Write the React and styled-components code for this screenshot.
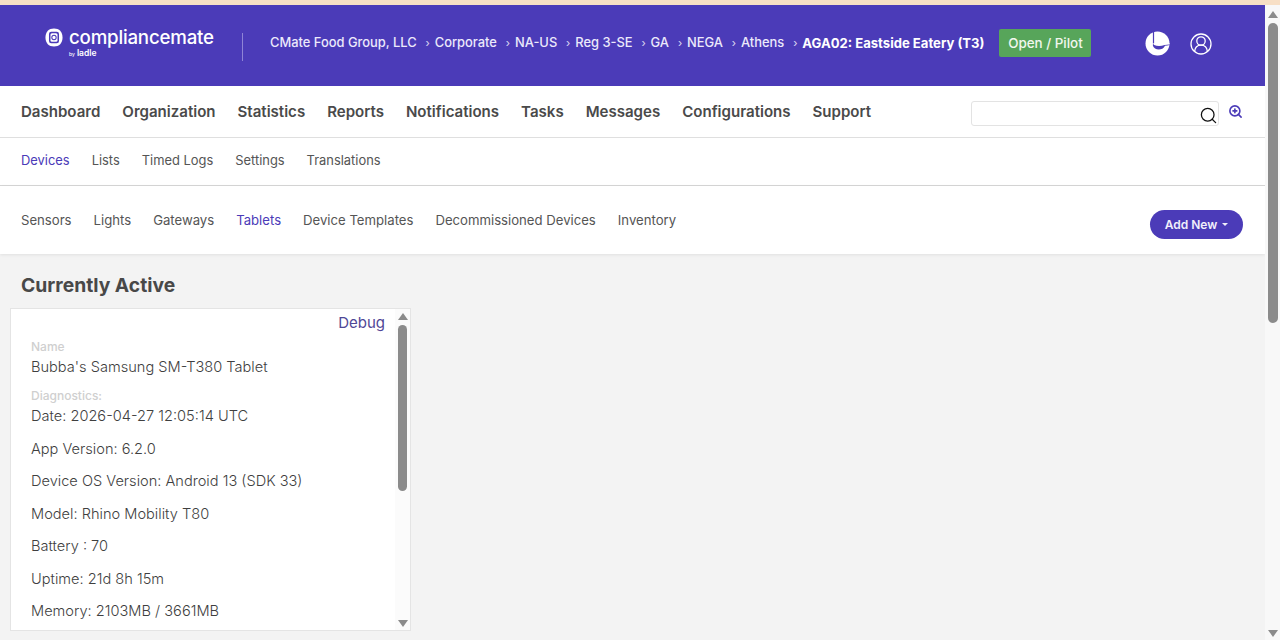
import React from "react";
import styled, { createGlobalStyle } from "styled-components";
import { Search, ZoomIn } from "lucide-react";

const GlobalStyle = createGlobalStyle`
  html, body {
    margin: 0;
    height: 100%;
    overflow: hidden;
    background: #f3f3f3;
  }
  * {
    box-sizing: border-box;
  }
  body {
    font-family: Inter, "Open Sans", sans-serif;
    color: #444;
  }
`;

const Window = styled.div`
  height: 640px;
  display: flex;
  flex-direction: column;
`;
const TopStrip = styled.div`
  height: 5px;
  background: #f7dfc5;
  flex: none;
`;
const Body = styled.div`
  flex: 1;
  display: flex;
  min-height: 0;
`;
const Page = styled.div`
  flex: 1;
  min-width: 0;
`;
const Header = styled.header`
  height: 81px;
  background: #4b3bb8;
  color: #fff;
  display: flex;
  align-items: flex-start;
  padding: 22px 0 0 45px;
`;
const Logo = styled.div`
  width: 170px;
  display: flex;
  gap: 6px;
  margin-top: 1px;
`;
const LogoText = styled.div`
  display: flex;
  flex-direction: column;
  .name {
    font-size: 18.7px;
    line-height: 20px;
    font-weight: 500;
    letter-spacing: -0.2px;
  }
  .by {
    font-size: 5px;
    line-height: 10px;
    font-weight: 500;
    b {
      font-size: 8.5px;
      font-weight: 600;
      margin-left: 2px;
    }
  }
`;
const Divider = styled.div`
  width: 1px;
  height: 28px;
  background: #8f84d6;
  margin: 6px 27px 0 27px;
`;
const Crumbs = styled.div`
  display: flex;
  align-items: center;
  height: 31px;
  font-size: 12.9px;
  color: #ece9fb;
  white-space: nowrap;
`;
const Crumb = styled.span`
  font-weight: ${(p) => (p.$current ? 700 : 500)};
  font-size: ${(p) => (p.$current ? "13.1px" : "inherit")};
  color: ${(p) => (p.$current ? "#fff" : "#ece9fb")};
  margin-top: ${(p) => (p.$current ? "1px" : "0")};
`;
const Chevron = styled.span`
  width: 18px;
  text-align: center;
  font-size: 11px;
  padding-left: 4px;
  opacity: 0.9;
`;
const StatusBadge = styled.span`
  width: 92px;
  height: 28px;
  margin: 1px 0 0 15px;
  background: #57a55a;
  border-radius: 2px;
  display: flex;
  align-items: center;
  justify-content: center;
  font-size: 13.4px;
  font-weight: 500;
  color: #f2f7ee;
`;
const HeaderIcons = styled.div`
  display: flex;
  align-items: center;
  gap: 20px;
  margin: 4px 0 0 54px;
`;

const NavBar = styled.nav`
  height: 52px;
  background: #fff;
  border-bottom: 1px solid #dfdfdf;
  display: flex;
  align-items: center;
  justify-content: space-between;
  padding: 0 22px 0 21px;
`;
const MainLinks = styled.div`
  display: flex;
  gap: 22px;
  margin-top: -1px;
`;
const MainLink = styled.a`
  font-size: 15.05px;
  font-weight: 600;
  color: #4a4a4a;
`;
const SearchWrap = styled.div`
  display: flex;
  align-items: center;
  gap: 9px;
  margin-top: 3px;
  color: #4b3bb8;
`;
const SearchBox = styled.div`
  width: 248px;
  height: 25px;
  border: 1px solid #e3e3e3;
  border-radius: 3px;
  background: #fff;
  display: flex;
  align-items: flex-end;
  justify-content: flex-end;
  color: #111;
`;
const ZoomMark = styled.span`
  display: flex;
  margin-top: -3px;
`;
const SubBar = styled.div`
  height: 48px;
  background: #fff;
  border-bottom: 1px solid #d6d6d6;
  display: flex;
  align-items: center;
  gap: 22px;
  padding: 0 21px 2px;
  font-size: 12.9px;
`;
const TabBar = styled.div`
  height: 68px;
  background: #fff;
  box-shadow: 0 1px 3px rgba(0, 0, 0, 0.08);
  display: flex;
  align-items: flex-start;
  justify-content: space-between;
  padding: 24px 22px 0 21px;
  font-size: 13.15px;
`;
const TabLinks = styled.div`
  display: flex;
  gap: 22px;
`;
const SubLink = styled.a`
  line-height: 20px;
  color: ${(p) => (p.$active ? "#4b3bb8" : "#555")};
`;
const AddButton = styled.button`
  width: 93px;
  height: 29px;
  border: 0;
  border-radius: 15px;
  background: #4b3bb8;
  color: #f1effb;
  font: 600 12px Inter, sans-serif;
  display: flex;
  align-items: center;
  justify-content: center;
  gap: 5px;
  &::after {
    content: "";
    border-top: 3px solid #f1effb;
    border-left: 3px solid transparent;
    border-right: 3px solid transparent;
  }
`;
const Title = styled.h2`
  margin: 18px 0 10px 21px;
  font-size: 19.3px;
  line-height: 26px;
  font-weight: 700;
  color: #484848;
`;
const Card = styled.section`
  width: 401px;
  height: 323px;
  margin-left: 10px;
  background: #fff;
  border: 1px solid #e4e4e4;
  display: flex;
  overflow: hidden;
`;
const CardBody = styled.div`
  flex: 1;
  min-width: 0;
  padding: 5px 10px 0 20px;
`;
const DebugLink = styled.a`
  display: block;
  text-align: right;
  font-size: 15px;
  line-height: 18px;
  color: #4f4796;
`;
const FieldLabel = styled.div`
  font-size: 12px;
  line-height: 16px;
  font-weight: 500;
  color: #cfcfcf;
  margin-top: ${(p) => p.$top || 0}px;
`;
const FieldValue = styled.div`
  font-size: 14.6px;
  line-height: 22px;
  font-weight: 300;
  color: #3f3f3f;
  margin-top: ${(p) => p.$top || 0}px;
  margin-bottom: ${(p) => p.$gap || 0}px;
`;
const Track = styled.div`
  flex: none;
  width: ${(p) => p.$w}px;
  background: ${(p) => p.$bg};
  display: flex;
  flex-direction: column;
  align-items: center;
  padding: ${(p) => p.$pad};
`;
const Arrow = styled.div`
  flex: none;
  border-left: 5px solid transparent;
  border-right: 5px solid transparent;
  ${(p) => (p.$down ? "border-top" : "border-bottom")}: 7px solid #8b8b8b;
  margin-top: ${(p) => (p.$down ? "auto" : "0")};
`;
const Thumb = styled.div`
  flex: none;
  width: ${(p) => p.$w}px;
  height: ${(p) => p.$h}px;
  background: #8b8b8b;
  border-radius: 5px;
  margin-top: 5px;
`;

const crumbs = ["CMate Food Group, LLC", "Corporate", "NA-US", "Reg 3-SE", "GA", "NEGA", "Athens"];
const mainLinks = ["Dashboard", "Organization", "Statistics", "Reports", "Notifications", "Tasks", "Messages", "Configurations", "Support"];
const subLinks = ["Devices", "Lists", "Timed Logs", "Settings", "Translations"];
const tabs = ["Sensors", "Lights", "Gateways", "Tablets", "Device Templates", "Decommissioned Devices", "Inventory"];
const diagnostics = [
  "Date: 2026-04-27 12:05:14 UTC",
  "App Version: 6.2.0",
  "Device OS Version: Android 13 (SDK 33)",
  "Model: Rhino Mobility T80",
  "Battery : 70",
  "Uptime: 21d 8h 15m",
  "Memory: 2103MB / 3661MB",
];

function LogoMark() {
  return (
    <svg width="18" height="19" viewBox="0 0 19 20">
      <path d="M9.5 0.5C15 0.5 18.5 4 18.5 10S15 19.5 9.500 19.5 0.5 16 0.5 10 4 0.5 9.5 0.5Z" fill="#fff" />
      <rect x="4.2" y="3.800" width="10.600" height="12.400" rx="2.400" fill="#4b3bb8" />
      <rect x="5.800" y="5.600" width="7.400" height="8.800" rx="1.600" fill="#fff" />
      <circle cx="9.500" cy="10" r="2.300" fill="none" stroke="#4b3bb8" strokeWidth="1.100" />
    </svg>
  );
}

function LadleIcon() {
  return (
    <svg width="25" height="25" viewBox="0 0 25 25">
      <circle cx="12.500" cy="12.500" r="12" fill="#fff" />
      <path d="M8.500 0.500V12.500" stroke="#4b3bb8" strokeWidth="1.200" />
      <path d="M7.900 13.200H24.800V14C23 14.600 21.400 14.800 20 14.800 18.800 17.400 16.200 18.600 13.800 18.600 11 18.600 8.600 17 7.900 14.800Z" fill="#4b3bb8" />
      <path d="M9.200 14C12 15.200 16 15.200 19.600 14L24.800 13.200V12.600H8.500Z" fill="#fff" />
    </svg>
  );
}

function UserIcon() {
  return (
    <svg width="22" height="22" viewBox="0 0 22 22" fill="none" stroke="#fff" strokeWidth="1.300">
      <circle cx="11" cy="11" r="10" />
      <circle cx="11" cy="8" r="4.200" />
      <path d="M4.600 18.400c.4-3.800 2.600-6.200 6.400-6.200s6 2.400 6.400 6.200" />
    </svg>
  );
}

export default function App() {
  return (
    <Window>
      <GlobalStyle />
      <TopStrip />
      <Body>
        <Page>
          <Header>
            <Logo>
              <LogoMark />
              <LogoText>
                <span className="name">compliancemate</span>
                <span className="by">
                  by<b>ladle</b>
                </span>
              </LogoText>
            </Logo>
            <Divider />
            <Crumbs>
              {crumbs.map((c) => (
                <React.Fragment key={c}>
                  <Crumb>{c}</Crumb>
                  <Chevron>›</Chevron>
                </React.Fragment>
              ))}
              <Crumb $current>AGA02: Eastside Eatery (T3)</Crumb>
              <StatusBadge>Open / Pilot</StatusBadge>
            </Crumbs>
            <HeaderIcons>
              <LadleIcon />
              <UserIcon />
            </HeaderIcons>
          </Header>
          <NavBar>
            <MainLinks>
              {mainLinks.map((l) => (
                <MainLink key={l}>{l}</MainLink>
              ))}
            </MainLinks>
            <SearchWrap>
              <SearchBox>
                <Search size={19} strokeWidth={1.6} />
              </SearchBox>
              <ZoomMark>
                <ZoomIn size={15} strokeWidth={2.6} />
              </ZoomMark>
            </SearchWrap>
          </NavBar>
          <SubBar>
            {subLinks.map((l, i) => (
              <SubLink key={l} $active={i === 0}>
                {l}
              </SubLink>
            ))}
          </SubBar>
          <TabBar>
            <TabLinks>
              {tabs.map((l) => (
                <SubLink key={l} $active={l === "Tablets"}>
                  {l}
                </SubLink>
              ))}
            </TabLinks>
            <AddButton>Add New</AddButton>
          </TabBar>
          <Title>Currently Active</Title>
          <Card>
            <CardBody>
              <DebugLink>Debug</DebugLink>
              <FieldLabel $top={7}>Name</FieldLabel>
              <FieldValue $top={1}>Bubba's Samsung SM-T380 Tablet</FieldValue>
              <FieldLabel $top={10}>Diagnostics:</FieldLabel>
              {diagnostics.map((d, i) => (
                <FieldValue key={d} $top={i === 0 ? 1 : 0} $gap={10.5}>
                  {d}
                </FieldValue>
              ))}
            </CardBody>
            <Track $w={15} $bg="#fbfbfb" $pad="4px 0 3px">
              <Arrow />
              <Thumb $w={9} $h={166} />
              <Arrow $down />
            </Track>
          </Card>
        </Page>
        <Track $w={15} $bg="#f8f8f8" $pad="6px 0 3px">
          <Arrow />
          <Thumb $w={10} $h={300} />
          <Arrow $down />
        </Track>
      </Body>
    </Window>
  );
}
